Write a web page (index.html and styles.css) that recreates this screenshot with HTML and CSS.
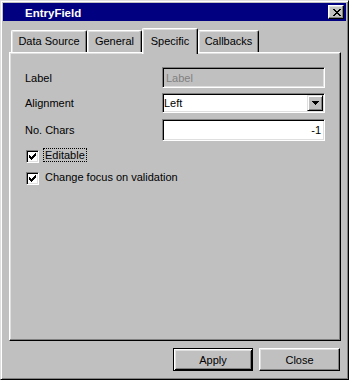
FILE: index.html
```html
<!DOCTYPE html>
<html lang="en">
<head>
    <meta charset="UTF-8">
    <meta name="viewport" content="width=device-width, initial-scale=1.0">
    <title>EntryField</title>
    <link rel="stylesheet" href="styles.css">
</head>
<body>
    <div class="window">
        <div class="titlebar">
            <span class="title">EntryField</span>
            <button class="close-btn">
                <svg width="8" height="7" viewBox="0 0 8 7" shape-rendering="crispEdges">
                    <path d="M0 0h2v1H0z M6 0h2v1H6z M1 1h2v1H1z M5 1h2v1H5z M2 2h4v1H2z M3 3h2v1H3z M2 4h4v1H2z M1 5h2v1H1z M5 5h2v1H5z M0 6h2v1H0z M6 6h2v1H6z" fill="#000"/>
                </svg>
            </button>
        </div>

        <div class="content">
            <!-- Tablar -->
            <div class="tabs">
                <div class="tab tab-source">Data Source</div>
                <div class="tab tab-general">General</div>
                <div class="tab tab-specific active">Specific</div>
                <div class="tab tab-callbacks">Callbacks</div>
            </div>

            <div class="panel">
                <div class="row row-label">
                    <span class="row-name">Label</span>
                    <div class="field field-disabled">Label</div>
                </div>
                <div class="row row-align">
                    <span class="row-name">Alignment</span>
                    <div class="field combo">
                        <span class="combo-text">Left</span>
                        <span class="combo-btn">
                            <svg width="7" height="4" viewBox="0 0 7 4" shape-rendering="crispEdges">
                                <path d="M0 0h7v1H0z M1 1h5v1H1z M2 2h3v1H2z M3 3h1v1H3z" fill="#000"/>
                            </svg>
                        </span>
                    </div>
                </div>
                <div class="row row-chars">
                    <span class="row-name">No. Chars</span>
                    <div class="field field-num">-1</div>
                </div>

                <div class="check-row">
                    <span class="checkbox">
                        <svg width="7" height="7" viewBox="0 0 7 7" shape-rendering="crispEdges">
                            <path d="M6 0h1v1H6z M5 1h2v1H5z M0 2h1v1H0z M4 2h3v1H4z M0 3h2v1H0z M3 3h3v1H3z M0 4h5v1H0z M1 5h3v1H1z M2 6h1v1H2z" fill="#000"/>
                        </svg>
                    </span>
                    <span class="check-label focused">Editable</span>
                </div>
                <div class="check-row">
                    <span class="checkbox">
                        <svg width="7" height="7" viewBox="0 0 7 7" shape-rendering="crispEdges">
                            <path d="M6 0h1v1H6z M5 1h2v1H5z M0 2h1v1H0z M4 2h3v1H4z M0 3h2v1H0z M3 3h3v1H3z M0 4h5v1H0z M1 5h3v1H1z M2 6h1v1H2z" fill="#000"/>
                        </svg>
                    </span>
                    <span class="check-label">Change focus on validation</span>
                </div>
            </div>

            <div class="buttons">
                <button class="btn btn-default">Apply</button>
                <button class="btn btn-close">Close</button>
            </div>
        </div>
    </div>
</body>
</html>
```

FILE: styles.css
```css
/* Umumi */
body {
    margin: 0;
    font-family: "Liberation Sans", Arial, sans-serif;
    font-size: 11px;
    color: #000;
    background: #c0c0c0;
}

.window {
    box-sizing: border-box;
    width: 349px;
    height: 380px;
    background: #c0c0c0;
    border: 1px solid;
    border-color: #dfdfdf #000 #000 #dfdfdf;
    box-shadow: inset 1px 1px #fff, inset -1px -1px #808080;
    padding: 2px;
    display: flex;
    flex-direction: column;
}

/* Basliq */
.titlebar {
    height: 18px;
    background: #000080;
    display: flex;
    align-items: center;
    justify-content: space-between;
}

.title {
    color: #fff;
    font-weight: bold;
    font-size: 11.5px;
    padding-left: 22px;
    padding-top: 1px;
}

.close-btn {
    box-sizing: border-box;
    width: 16px;
    height: 14px;
    margin-right: 2px;
    padding: 0;
    background: #c0c0c0;
    border: 1px solid;
    border-color: #fff #000 #000 #fff;
    box-shadow: inset -1px -1px #808080, inset 1px 1px #dfdfdf;
    display: flex;
    align-items: center;
    justify-content: center;
}

.close-btn svg {
    display: block;
    margin-left: 1px;
}

.content {
    flex: 1;
    padding: 7px 5px 6px 6px;
    display: flex;
    flex-direction: column;
}

/* Tablar */
.tabs {
    display: flex;
    align-items: flex-start;
    height: 24px;
    padding-left: 2px;
}

.tab {
    box-sizing: border-box;
    height: 22px;
    margin-top: 2px;
    padding-top: 3px;
    line-height: 14px;
    text-align: center;
    background: #c0c0c0;
    border-top: 1px solid #fff;
    border-left: 1px solid #fff;
    border-right: 1px solid #000;
    border-radius: 2px 2px 0 0;
    box-shadow: inset -1px 0 #808080, inset 1px 1px #dfdfdf;
}

.tab-source { width: 76px; }
.tab-general { width: 55px; }
.tab-specific { width: 56px; }
.tab-callbacks { width: 61px; }

.tab.active {
    height: 26px;
    margin-top: 0;
    padding-top: 5px;
    position: relative;
    z-index: 1;
}

/* Panel */
.panel {
    box-sizing: border-box;
    height: 289px;
    border: 1px solid;
    border-color: #fff #000 #000 #fff;
    box-shadow: inset -1px -1px #808080, inset 1px 1px #dfdfdf;
    padding: 14px 14px 0 15px;
}

.row {
    display: flex;
    align-items: center;
    height: 21px;
}

.row-align {
    height: 20px;
    margin-top: 5px;
}

.row-chars {
    height: 22px;
    margin-top: 6px;
}

.row-name {
    width: 137px;
}

.field {
    box-sizing: border-box;
    width: 163px;
    height: 100%;
    border: 1px solid;
    border-color: #808080 #fff #fff #808080;
    box-shadow: inset 1px 1px #000, inset -1px -1px #dfdfdf;
    padding: 1px;
    background: #fff;
    display: flex;
    align-items: center;
}

.field-disabled {
    background: #c0c0c0;
    color: #808080;
    padding-left: 3px;
}

.combo-text {
    flex: 1;
}

.combo-btn {
    box-sizing: border-box;
    width: 16px;
    height: 16px;
    background: #c0c0c0;
    border: 1px solid;
    border-color: #dfdfdf #000 #000 #dfdfdf;
    box-shadow: inset 1px 1px #fff, inset -1px -1px #808080;
    display: flex;
    align-items: center;
    justify-content: center;
}

.combo-btn svg {
    display: block;
}

.field-num {
    justify-content: flex-end;
    padding-right: 3px;
}

/* Checkbox */
.check-row {
    display: flex;
    align-items: flex-start;
    height: 14px;
    margin-top: 8px;
    padding-left: 1px;
}

.row-chars + .check-row {
    margin-top: 7px;
}

.checkbox {
    box-sizing: border-box;
    width: 13px;
    height: 13px;
    margin-top: 2px;
    background: #fff;
    border: 1px solid;
    border-color: #808080 #fff #fff #808080;
    box-shadow: inset 1px 1px #000, inset -1px -1px #dfdfdf;
    padding: 2px;
}

.checkbox svg {
    display: block;
}

.check-label {
    margin-left: 4px;
    padding: 0 1px;
    line-height: 12px;
    border: 1px dotted transparent;
}

.check-label.focused {
    border-color: #000;
}

/* Duymeler */
.buttons {
    display: flex;
    justify-content: flex-end;
    gap: 6px;
    margin-top: 7px;
    padding-right: 1px;
}

.btn {
    box-sizing: border-box;
    width: 80px;
    height: 23px;
    padding: 0;
    font-family: "Liberation Sans", Arial, sans-serif;
    font-size: 11px;
    color: #000;
    background: #c0c0c0;
    border: 1px solid;
    border-color: #fff #000 #000 #fff;
    box-shadow: inset -1px -1px #808080, inset 1px 1px #dfdfdf;
}

.btn-close {
    width: 81px;
}

.btn-default {
    border-color: #000;
    box-shadow: inset 1px 1px #fff, inset -1px -1px #000, inset 2px 2px #dfdfdf, inset -2px -2px #808080;
}
```
